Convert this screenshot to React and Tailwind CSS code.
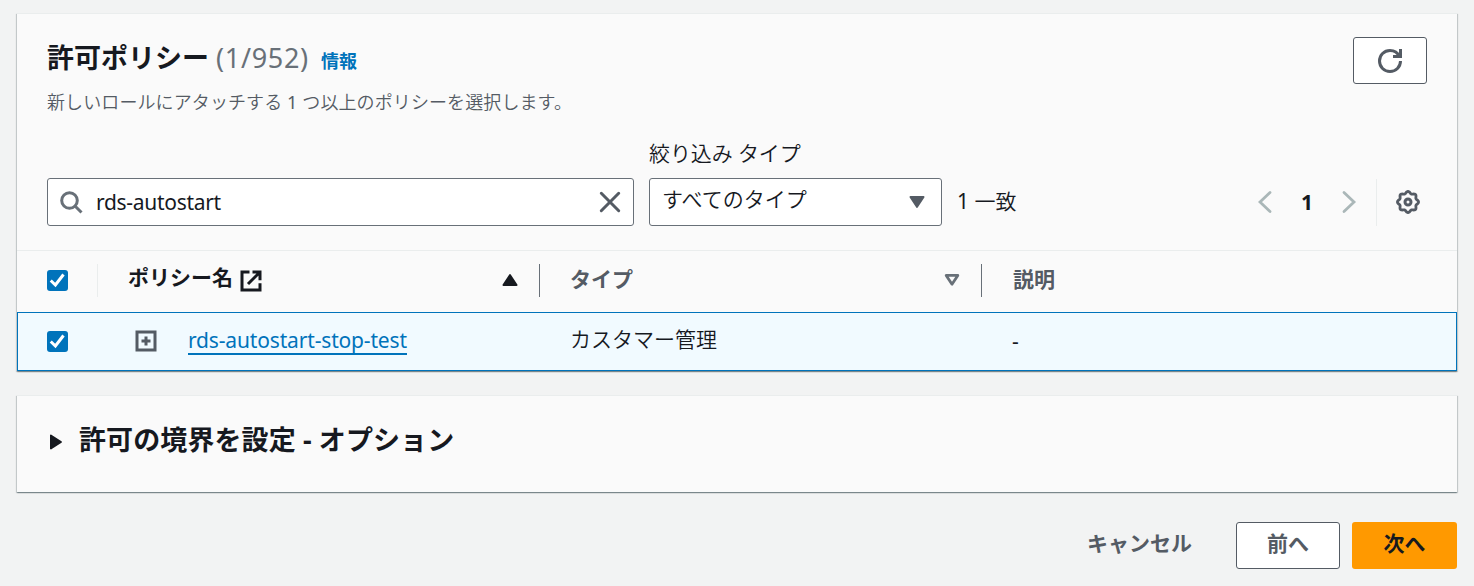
import React from "react";

const cardShadow =
  "shadow-[0_1px_1px_0_rgba(0,28,36,0.3),1px_1px_1px_0_rgba(0,28,36,0.15),-1px_1px_1px_0_rgba(0,28,36,0.15)]";

const Checkbox = () => (
  <span className="flex size-[21px] shrink-0 items-center justify-center rounded-[3px] bg-[#0073bb]">
    <svg viewBox="0 0 14 14" className="size-[21px]" fill="none" stroke="#fff" strokeWidth="2">
      <path d="M2.5 7l3.1 3 5.4-7" />
    </svg>
  </span>
);

const SearchIcon = () => (
  <svg viewBox="0 0 16 16" className="size-6 shrink-0" fill="none" stroke="#687078" strokeWidth="2">
    <circle cx="7" cy="7" r="5.2" />
    <path d="M15 15l-4.5-4.5" />
  </svg>
);

const CloseIcon = () => (
  <svg viewBox="0 0 16 16" className="size-6 shrink-0" fill="none" stroke="#545b64" strokeWidth="2" strokeLinecap="round">
    <path d="M2.2 2.2l11.6 11.6M13.8 2.2L2.2 13.8" />
  </svg>
);

const RefreshIcon = () => (
  <svg viewBox="0 0 16 16" className="size-6" fill="none" stroke="#545b64" strokeWidth="2">
    <path d="M15 8c0 3.9-3.1 7-7 7s-7-3.1-7-7 3.1-7 7-7c2.8 0 5.2 1.6 6.3 4" />
    <path d="M10 5h5V0" />
  </svg>
);

// Ring with eight round lobes
const gearPoints = Array.from({ length: 96 }, (_, i) => {
  const a = (i / 96) * Math.PI * 2;
  const r = 9.6 + 0.95 * Math.cos(8 * a);
  return `${(12 + r * Math.cos(a)).toFixed(2)},${(12 + r * Math.sin(a)).toFixed(2)}`;
}).join(" ");

const GearIcon = () => (
  <svg viewBox="0 0 24 24" className="size-6" fill="none" stroke="#545b64" strokeLinejoin="round">
    <polygon points={gearPoints} strokeWidth="2.8" />
    <circle cx="12" cy="12" r="3" strokeWidth="3" />
  </svg>
);

const ExternalIcon = () => (
  <svg viewBox="0 0 16 16" className="size-6" fill="none" stroke="#16191f" strokeWidth="2">
    <path d="M14 9.500V14H2V2h5" />
    <path d="M14 7.500V2H9M14 2L6 10" />
  </svg>
);

const ExpandIcon = () => (
  <svg viewBox="0 0 16 16" className="size-6" fill="none" stroke="#545b64" strokeWidth="2">
    <path d="M2 2h12v12H2zM8 5v6M5 8h6" />
  </svg>
);

const Triangle = ({ className, hollow }) => (
  <svg viewBox="0 0 16 14" className={className} fill={hollow ? "none" : "currentColor"} stroke="currentColor" strokeWidth={hollow ? 2.8 : 1.8} strokeLinejoin="round">
    <path d={hollow ? "M2.200 2.400h11.600L8 11.200z" : "M1.400 1.900h13.200L8 12z"} />
  </svg>
);

const Chevron = ({ d }) => (
  <svg viewBox="0 0 16 24" className="h-6 w-4" fill="none" stroke="#aab7b8" strokeWidth="2.800" strokeLinecap="round">
    <path d={d} />
  </svg>
);

const PolicyTable = () => (
  <div className="border-t border-[#eaeded]">
    <div className="grid h-[61px] grid-cols-[81px_442px_442px_1fr] items-center pb-0.5 font-bold text-[#545b64]">
      <div className="flex h-[33px] items-center border-r border-[#eaeded] pl-[30px]">
        <Checkbox />
      </div>
      <div className="flex h-[33px] items-center border-r border-[#687078] pr-[21px] pl-[30px] text-[#16191f]">
        <span className="-mt-2">ポリシー名</span>
        <span className="ml-1.5">
          <ExternalIcon />
        </span>
        <Triangle className="mb-px ml-auto h-[14px] w-4 rotate-180" />
      </div>
      <div className="flex h-[33px] items-center justify-between border-r border-[#687078] pr-[21px] pl-[30px]">
        <span className="-mt-1">タイプ</span>
        <Triangle className="mb-px h-[14px] w-4 text-[#687078]" hollow />
      </div>
      <div className="-mt-1 pl-[31px]">説明</div>
    </div>
    <div className="grid h-[59px] grid-cols-[80px_442px_442px_1fr] items-center border border-[#0073bb] bg-[#f1faff]">
      <div className="pl-[29px]">
        <Checkbox />
      </div>
      <div className="flex items-center pb-0.5 pl-9">
        <ExpandIcon />
        <a className="ml-[30px] border-b-2 border-[#0073bb] leading-[26px] tracking-[-0.16px] text-[#0073bb]" href="#">
          rds-autostart-stop-test
        </a>
      </div>
      <div className="-mt-[5px] pl-[30px] font-[350]">カスタマー管理</div>
      <div className="-mt-0.5 pl-[30px]">-</div>
    </div>
  </div>
);

const App = () => (
  <main className="h-[586px] overflow-hidden bg-[#f2f3f3] px-[17px] pt-[13px] font-['Noto_Sans','Noto_Sans_CJK_JP',sans-serif] text-[21px] leading-[30px] text-[#16191f]">
    <section className={`h-[358px] border-t border-[#eaeded] bg-[#fafafa] ${cardShadow}`}>
      <header className="flex h-[127px] justify-between px-[30px] pt-[23px]">
        <div>
          <div className="flex items-baseline leading-[42px]">
            <h2 className="text-[27px] font-bold">許可ポリシー</h2>
            <span className="ml-[7px] text-[27px] tracking-[0.7px] text-[#687078]">(1/952)</span>
            <a className="ml-3 text-[18px] font-bold text-[#0073bb]" href="#">情報</a>
          </div>
          <p className="mt-[5px] text-[18px] font-[350] tracking-[0.1px] text-[#545b64]">
            新しいロールにアタッチする <span className="font-normal">1</span> つ以上のポリシーを選択します。
          </p>
        </div>
        <button className="flex h-[47px] w-[74px] items-center justify-center rounded-[3px] border border-[#545b64] bg-white">
          <RefreshIcon />
        </button>
      </header>

      <div className="flex h-[109px] items-end px-[30px] pb-6">
        <div className="flex h-12 w-[587px] items-center rounded-[3px] border border-[#687078] bg-white px-[11px]">
          <SearchIcon />
          <span className="mr-auto ml-[13px] tracking-[-0.3px]">rds-autostart</span>
          <CloseIcon />
        </div>
        <div className="ml-[15px] w-[293px]">
          <label className="mb-2.5 block font-[350] tracking-[-0.1px]">絞り込み タイプ</label>
          <div className="flex h-12 items-center justify-between rounded-[3px] border border-[#687078] bg-white pr-4 pl-3">
            <span className="-mt-1.5 font-[350]">すべてのタイプ</span>
            <Triangle className="h-[14px] w-4 text-[#545b64]" />
          </div>
        </div>
        <span className="mb-px ml-[15px] leading-[48px] font-[350]"><span className="font-normal">1</span> 一致</span>
        <div className="ml-auto flex h-12 items-center">
          <Chevron d="M12 2.500L2 12l10 9.500" />
          <span className="mr-7 ml-[27px] font-bold">1</span>
          <Chevron d="M3 2.500L13 12 3 21.500" />
          <div className="ml-[19px] flex h-[47px] items-center border-l border-[#eaeded] pr-[7px] pl-[19px]">
            <GearIcon />
          </div>
        </div>
      </div>

      <PolicyTable />
    </section>

    <section className={`mt-6 flex h-[97px] items-center border-t border-[#eaeded] bg-[#fafafa] pr-[30px] pb-[5px] pl-[31px] text-[27px] font-bold ${cardShadow}`}>
      <Triangle className="h-[14px] w-4 -rotate-90" />
      <h2 className="-mt-1 ml-[15px] tracking-[0.1px]">許可の境界を設定 - オプション</h2>
    </section>

    <footer className="mt-[30px] flex h-[47px] items-center justify-end font-bold text-[#545b64]">
      <button className="mr-11 pb-[5px]">キャンセル</button>
      <button className="h-full w-[104px] rounded-[3px] border border-[#545b64] bg-white pb-[5px]">前へ</button>
      <button className="ml-3 h-full w-[105px] rounded-[3px] bg-[#ff9900] pb-[5px] text-[#16191f]">次へ</button>
    </footer>
  </main>
);

export default App;
